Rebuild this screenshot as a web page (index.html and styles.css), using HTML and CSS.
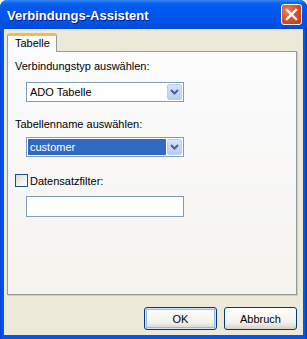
FILE: index.html
```html
<!DOCTYPE html>
<html lang="de">
  <head>
    <meta charset="utf-8">
    <title>Verbindungs-Assistent</title>
    <link rel="stylesheet" href="styles.css">
  </head>
  <body>
    <div class="window">
      <div class="titlebar">
        <span class="title">Verbindungs-Assistent</span>
        <span class="close">
          <svg width="13" height="13" viewBox="0 0 13 13">
            <path d="M2 2 L11 11 M11 2 L2 11" stroke="#fff" stroke-width="2.4" stroke-linecap="square"/>
          </svg>
        </span>
      </div>
      <div class="client">
        <div class="tabs">
          <div class="tab">Tabelle</div>
        </div>
        <div class="panel">
          <div class="label first">Verbindungstyp auswählen:</div>
          <div class="combo">
            <span class="value">ADO Tabelle</span>
            <span class="drop">
              <svg width="9" height="6" viewBox="0 0 9 6">
                <path d="M1 1 L4.5 4.5 L8 1" fill="none" stroke="#4d6185" stroke-width="2"/>
              </svg>
            </span>
          </div>
          <div class="label">Tabellenname auswählen:</div>
          <div class="combo">
            <span class="value selected">customer</span>
            <span class="drop">
              <svg width="9" height="6" viewBox="0 0 9 6">
                <path d="M1 1 L4.5 4.5 L8 1" fill="none" stroke="#4d6185" stroke-width="2"/>
              </svg>
            </span>
          </div>
          <div class="check">
            <span class="box"></span>
            <span>Datensatzfilter:</span>
          </div>
          <div class="textbox"></div>
        </div>
        <div class="buttons">
          <button class="btn default">OK</button>
          <button class="btn">Abbruch</button>
        </div>
      </div>
    </div>
  </body>
</html>
```

FILE: styles.css
```css
body {
    margin: 0;
    font-family: 'Liberation Sans', Arial, sans-serif;
    font-size: 11px;
    color: #000;
}

.window {
    width: 307px;
    height: 339px;
    box-sizing: border-box;
    display: flex;
    flex-direction: column;
    background: linear-gradient(90deg, #0842d6, #0055ea 2px, #0055ea 305px, #0031b8);
    border-radius: 7px 7px 0 0;
    overflow: hidden;
}

.titlebar {
    height: 29px;
    flex: none;
    display: flex;
    align-items: center;
    justify-content: space-between;
    padding: 0 5px 0 7px;
    background: linear-gradient(#3d8cf6 0, #0b62ee 3px, #0058ee 8px, #0055ea 18px, #0050e0 26px, #0046d3 29px);
}

.title {
    color: #fff;
    font-weight: bold;
    font-size: 13px;
    text-shadow: 1px 1px #0a1883;
    padding-top: 1px;
}

.close {
    width: 21px;
    height: 21px;
    box-sizing: border-box;
    border: 1px solid #fff;
    border-radius: 3px;
    background: radial-gradient(circle at 30% 30%, #ee7e5a 0, #e04c22 50%, #c13a14 100%);
    display: flex;
    align-items: center;
    justify-content: center;
}

.client {
    flex: 1;
    margin: 0 4px 4px 4px;
    background: #ece9d8;
    display: flex;
    flex-direction: column;
    padding: 4px 6px 0 3px;
}

.tabs {
    display: flex;
}

.tab {
    height: 19px;
    box-sizing: border-box;
    width: 50px;
    margin-bottom: -1px;
    border: 1px solid #919b9c;
    border-bottom: none;
    border-top: 3px solid #f7b94b;
    border-radius: 3px 3px 0 0;
    background: #fcfcfe;
    padding: 1px 0 0 7px;
    position: relative;
    z-index: 1;
}

.panel {
    height: 244px;
    box-sizing: border-box;
    border: 1px solid #919b9c;
    box-shadow: 1px 1px 0 #d0cec4;
    background: linear-gradient(#fcfcfe, #f4f3ee);
    padding: 8px 0 0 7px;
}

.label {
    line-height: 13px;
}

.label.first {
    margin-bottom: 9px;
}

.combo + .label {
    margin: 16px 0 6px;
}

.combo {
    width: 158px;
    height: 20px;
    box-sizing: border-box;
    margin-left: 11px;
    border: 1px solid #7f9db9;
    background: #fff;
    display: flex;
    align-items: center;
    padding: 1px;
}

.value {
    flex: 1;
    height: 16px;
    line-height: 16px;
    padding-left: 2px;
    margin-right: 1px;
}

.value.selected {
    background: #316ac5;
    color: #fff;
}

.drop {
    width: 15px;
    height: 16px;
    box-sizing: border-box;
    border: 1px solid #b9cdf6;
    border-radius: 2px;
    background: linear-gradient(#d6e3fd, #b7ccf8);
    display: flex;
    align-items: center;
    justify-content: center;
}

.check {
    display: flex;
    align-items: center;
    margin-top: 17px;
    gap: 2px;
}

.box {
    width: 13px;
    height: 13px;
    box-sizing: border-box;
    border: 1px solid #1c5180;
    background: linear-gradient(135deg, #dcdcd7, #fff);
}

.textbox {
    width: 158px;
    height: 21px;
    box-sizing: border-box;
    margin: 9px 0 0 11px;
    border: 1px solid #7f9db9;
    background: #fff;
}

.buttons {
    display: flex;
    justify-content: flex-end;
    gap: 7px;
    margin-top: 12px;
}

.btn {
    width: 73px;
    height: 23px;
    border: 1px solid #003c74;
    border-radius: 3px;
    background: linear-gradient(#fff, #f2f1ea 70%, #d6d0c5);
    font-family: 'Liberation Sans', Arial, sans-serif;
    font-size: 11px;
    color: #000;
    padding: 0;
}

.btn.default {
    box-shadow: inset 0 0 0 1px #cee7ff, inset 0 0 0 2px #98b8ea;
}
```
